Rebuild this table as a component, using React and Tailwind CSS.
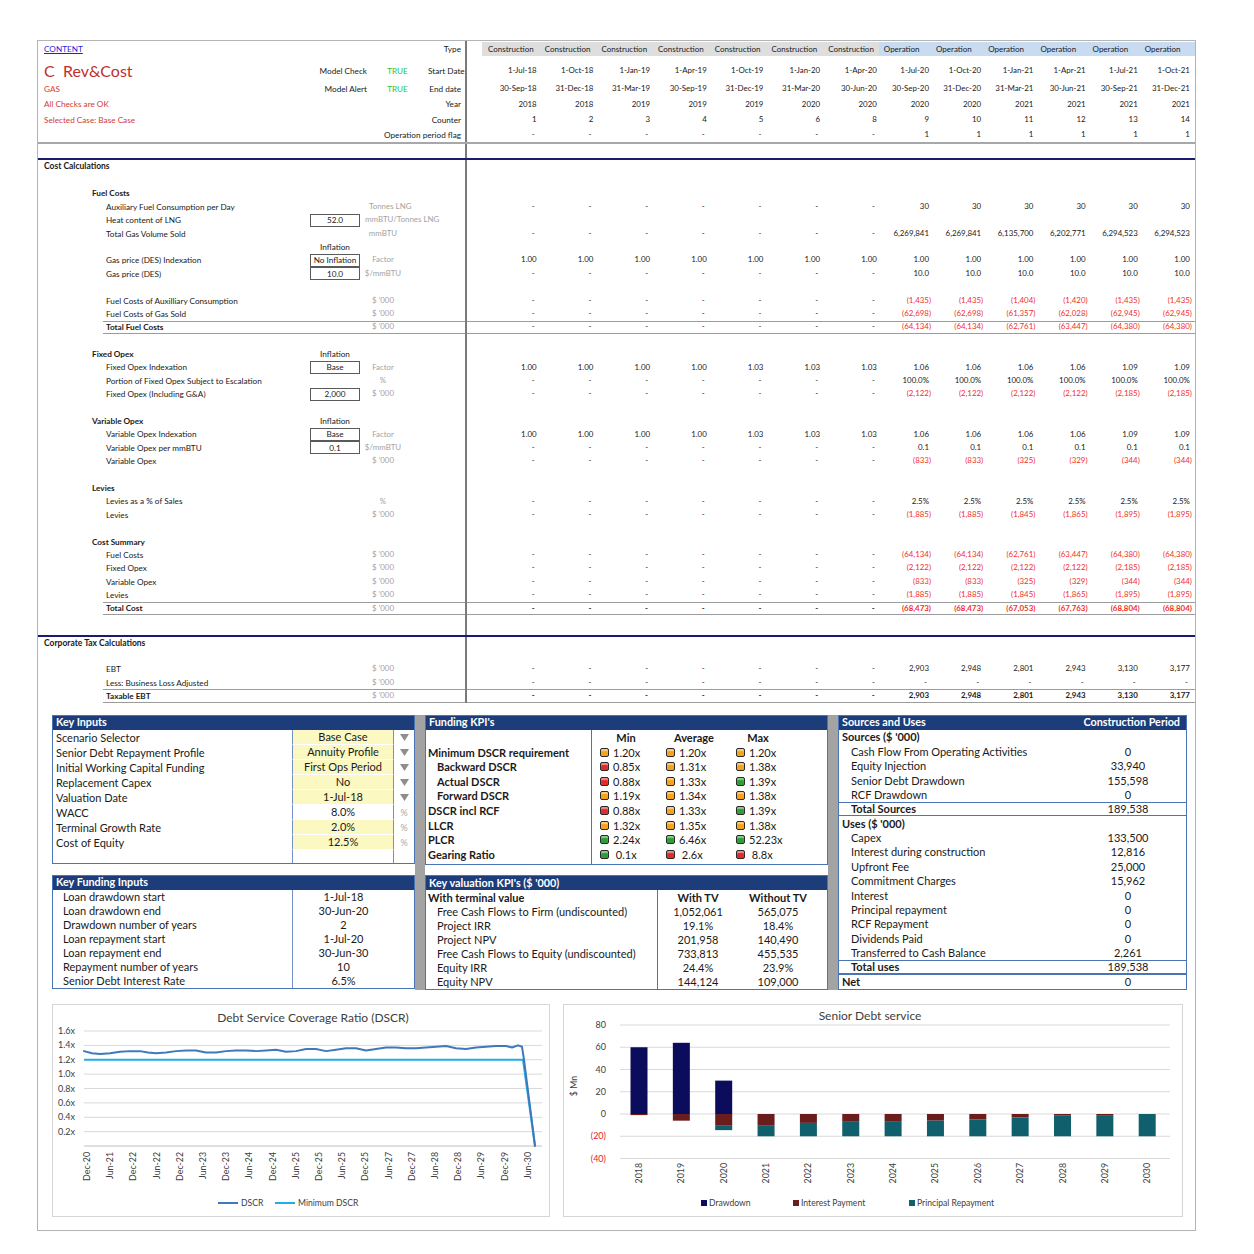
import React from 'react';

const d7 = ['-', '-', '-', '-', '-', '-', '-'];
const six = (v) => [v, v, v, v, v, v];
const ones = Array(13).fill('1.00');
const idx = ['1.00', '1.00', '1.00', '1.00', '1.03', '1.03', '1.03', '1.06', '1.06', '1.06', '1.06', '1.09', '1.09'];
const fuelTot = ['(64,134)', '(64,134)', '(62,761)', '(63,447)', '(64,380)', '(64,380)'];
const fixedOp = ['(2,122)', '(2,122)', '(2,122)', '(2,122)', '(2,185)', '(2,185)'];
const varOp = ['(833)', '(833)', '(325)', '(329)', '(344)', '(344)'];
const levies = ['(1,885)', '(1,885)', '(1,845)', '(1,865)', '(1,895)', '(1,895)'];
const K = "$ '000";

const rows = [
  { t: 'blank' },
  { t: 'sec', label: 'Fuel Costs' },
  { t: 'item', label: 'Auxiliary Fuel Consumption per Day', unit: 'Tonnes LNG', uc: 'pl-[9px] text-left', vals: [...d7, ...six('30')] },
  { t: 'item', label: 'Heat content of LNG', box: '52.0', unit: 'mmBTU/Tonnes LNG', uc: 'pl-[5px] text-left' },
  { t: 'item', label: 'Total Gas Volume Sold', unit: 'mmBTU', vals: [...d7, '6,269,841', '6,269,841', '6,135,700', '6,202,771', '6,294,523', '6,294,523'] },
  { t: 'infl' },
  { t: 'item', label: 'Gas price (DES) Indexation', box: 'No Inflation', unit: 'Factor', vals: ones },
  { t: 'item', label: 'Gas price (DES)', box: '10.0', unit: '$/mmBTU', vals: [...d7, ...six('10.0')] },
  { t: 'blank' },
  { t: 'item', label: 'Fuel Costs of Auxilliary Consumption', unit: K, vals: [...d7, '(1,435)', '(1,435)', '(1,404)', '(1,420)', '(1,435)', '(1,435)'] },
  { t: 'item', label: 'Fuel Costs of Gas Sold', unit: K, vals: [...d7, '(62,698)', '(62,698)', '(61,357)', '(62,028)', '(62,945)', '(62,945)'] },
  { t: 'total', label: 'Total Fuel Costs', vals: [...d7, ...fuelTot], nb: true },
  { t: 'blank' },
  { t: 'sec', label: 'Fixed Opex', infl: true },
  { t: 'item', label: 'Fixed Opex Indexation', box: 'Base', unit: 'Factor', vals: idx },
  { t: 'item', label: 'Portion of Fixed Opex Subject to Escalation', unit: '%', vals: [...d7, ...six('100.0%')] },
  { t: 'item', label: 'Fixed Opex (Including G&A)', box: '2,000', unit: K, vals: [...d7, ...fixedOp] },
  { t: 'blank' },
  { t: 'sec', label: 'Variable Opex', infl: true },
  { t: 'item', label: 'Variable Opex Indexation', box: 'Base', unit: 'Factor', vals: idx },
  { t: 'item', label: 'Variable Opex per mmBTU', box: '0.1', unit: '$/mmBTU', vals: [...d7, ...six('0.1')] },
  { t: 'item', label: 'Variable Opex', unit: K, vals: [...d7, ...varOp] },
  { t: 'blank' },
  { t: 'sec', label: 'Levies' },
  { t: 'item', label: 'Levies as a % of Sales', unit: '%', vals: [...d7, ...six('2.5%')] },
  { t: 'item', label: 'Levies', unit: K, vals: [...d7, ...levies] },
  { t: 'blank' },
  { t: 'sec', label: 'Cost Summary' },
  { t: 'item', label: 'Fuel Costs', unit: K, vals: [...d7, ...fuelTot] },
  { t: 'item', label: 'Fixed Opex', unit: K, vals: [...d7, ...fixedOp] },
  { t: 'item', label: 'Variable Opex', unit: K, vals: [...d7, ...varOp] },
  { t: 'item', label: 'Levies', unit: K, vals: [...d7, ...levies] },
  { t: 'total', label: 'Total Cost', vals: [...d7, '(68,473)', '(68,473)', '(67,053)', '(67,763)', '(68,804)', '(68,804)'] },
  { t: 'blank' },
];

const taxRows = [
  { t: 'blank' },
  { t: 'item', label: 'EBT', unit: K, vals: [...d7, '2,903', '2,948', '2,801', '2,943', '3,130', '3,177'] },
  { t: 'item', label: 'Less: Business Loss Adjusted', unit: K, vals: Array(13).fill('-') },
  { t: 'total', label: 'Taxable EBT', vals: [...d7, '2,903', '2,948', '2,801', '2,943', '3,130', '3,177'] },
];

const startD = ['1-Jul-18', '1-Oct-18', '1-Jan-19', '1-Apr-19', '1-Oct-19', '1-Jan-20', '1-Apr-20', '1-Jul-20', '1-Oct-20', '1-Jan-21', '1-Apr-21', '1-Jul-21', '1-Oct-21'];
const endD = ['30-Sep-18', '31-Dec-18', '31-Mar-19', '30-Sep-19', '31-Dec-19', '31-Mar-20', '30-Jun-20', '30-Sep-20', '31-Dec-20', '31-Mar-21', '30-Jun-21', '30-Sep-21', '31-Dec-21'];
const years = ['2018', '2018', '2019', '2019', '2019', '2020', '2020', '2020', '2020', '2021', '2021', '2021', '2021'];
const counter = ['1', '2', '3', '4', '5', '6', '8', '9', '10', '11', '12', '13', '14'];
const flag = [...d7, ...six('1')];

const LW = 'w-[429px] shrink-0 h-full border-r-2 border-[#7a7a7a] flex items-center';

function DataCells({ vals, bold }) {
  return (
    <div className={`flex h-full items-center text-[7.9px] ${bold ? 'font-bold' : ''}`}>
      <div className="w-[15px] shrink-0" />
      {Array.from({ length: 13 }).map((_, i) => {
        const v = vals ? vals[i] : '';
        const neg = v.startsWith('(');
        return (
          <div
            key={i}
            className={`${i < 7 ? 'w-[56.7px]' : 'w-[52.2px]'} shrink-0 text-right whitespace-nowrap ${neg ? 'text-[#f0302a] pr-0' : v === '-' ? 'pr-[4px]' : 'pr-[2px]'}`}
          >
            {v}
          </div>
        );
      })}
    </div>
  );
}

function Units({ unit, uc }) {
  return <div className={`w-[46px] shrink-0 whitespace-nowrap text-[#a3a3a3] text-[7.9px] ${uc || 'text-center'}`}>{unit}</div>;
}

function Box({ v }) {
  return v ? (
    <div className="w-[50px] h-[13px] shrink-0 border border-[#5a5a5a] flex items-center justify-center leading-none">{v}</div>
  ) : (
    <div className="w-[50px] shrink-0" />
  );
}

function SheetRow({ r }) {
  const H = 'flex h-[13.4px] items-center';
  if (r.t === 'total')
    return (
      <div className={H}>
        <div className={LW}>
          <div className="w-[65px] shrink-0" />
          <div className="flex-1 h-full flex items-center border-y border-[#9c9c9c]">
            <div className="w-[207px] shrink-0 pl-[3px] font-bold">{r.label}</div>
            <Box />
            <Units unit={K} />
          </div>
        </div>
        <div className="flex-1 h-full border-y border-[#9c9c9c]">
          <DataCells vals={r.vals} bold={!r.nb} />
        </div>
      </div>
    );
  if (r.t === 'blank')
    return (
      <div className={H}>
        <div className={LW} />
      </div>
    );
  if (r.t === 'infl' || r.t === 'sec')
    return (
      <div className={H}>
        <div className={LW}>
          <div className="w-[272px] shrink-0 pl-[54px] font-bold">{r.label || ''}</div>
          <div className="w-[50px] shrink-0 text-center">{r.t === 'infl' || r.infl ? 'Inflation' : ''}</div>
        </div>
      </div>
    );
  return (
    <div className={H}>
      <div className={LW}>
        <div className="w-[272px] shrink-0 pl-[68px] whitespace-nowrap">{r.label}</div>
        <Box v={r.box} />
        <Units unit={r.unit} uc={r.uc} />
      </div>
      <div className="flex-1 h-full">{r.vals && <DataCells vals={r.vals} />}</div>
    </div>
  );
}

function HeadRow({ h, left, mid, tf, label, vals, extra }) {
  return (
    <div className={`flex items-center ${h} ${extra || ''}`}>
      <div className={LW}>
        <div className="w-[250px] shrink-0 pl-[6px] whitespace-nowrap">{left}</div>
        {mid ? (
          <>
            <div className="w-[79px] shrink-0 text-right">{mid}</div>
            <div className="w-[61px] shrink-0 text-center text-[#2fbf2f]">{tf}</div>
            <div className="flex-1 text-right pr-[4px] whitespace-nowrap">{label}</div>
          </>
        ) : (
          <div className="flex-1 text-right pr-[4px] whitespace-nowrap">{label}</div>
        )}
      </div>
      <div className="flex-1 h-full">{vals && <DataCells vals={vals} />}</div>
    </div>
  );
}

function Spacer({ h }) {
  return (
    <div className={`flex ${h}`}>
      <div className={LW} />
    </div>
  );
}

function Sheet() {
  return (
    <div className="text-[8.2px] leading-none text-[#1a1a1a]">
      <div className="flex h-[16px] items-center">
        <div className={LW}>
          <div className="w-[250px] shrink-0 pl-[6px]">
            <span className="text-[#1f1fd8] underline">CONTENT</span>
          </div>
          <div className="flex-1 text-right pr-[4px]">Type</div>
        </div>
        <div className="flex h-[14px] items-center text-[8px]">
          <div className="w-[15px] shrink-0" />
          {Array.from({ length: 7 }).map((_, i) => (
            <div key={i} className="w-[56.7px] h-full shrink-0 bg-[#dedede] flex items-center pl-[6px] whitespace-nowrap">
              Construction
            </div>
          ))}
          {Array.from({ length: 6 }).map((_, i) => (
            <div key={i} className="w-[52.2px] h-full shrink-0 bg-[#c9dbf0] flex items-center pl-[5px] whitespace-nowrap">
              Operation
            </div>
          ))}
          <div className="w-[3px] h-full bg-[#c9dbf0]" />
        </div>
      </div>
      <Spacer h="h-[6px]" />
      <HeadRow
        h="h-[16px]"
        left={<span className="text-[16px] text-[#c0302b] leading-none">C&nbsp;&nbsp;Rev&amp;Cost</span>}
        mid="Model Check"
        tf="TRUE"
        label="Start Date"
        vals={startD}
      />
      <Spacer h="h-[2px]" />
      <HeadRow h="h-[16px]" left={<span className="text-[#d23c36] text-[8.2px]">GAS</span>} mid="Model Alert" tf="TRUE" label="End date" vals={endD} />
      <HeadRow h="h-[15px]" left={<span className="text-[#d23c36] text-[8.2px]">All Checks are OK</span>} label="Year" vals={years} />
      <HeadRow h="h-[16px]" left={<span className="text-[#d23c36] text-[8.2px]">Selected Case: Base Case</span>} label="Counter" vals={counter} />
      <HeadRow h="h-[16px]" label="Operation period flag" vals={flag} extra="border-b-2 border-[#a8a8a8]" />
      <Spacer h="h-[14px]" />
      <div className="flex h-[15.4px] items-center border-t-2 border-[#1b1b6e]">
        <div className={LW}>
          <div className="pl-[6px] font-bold text-[8.5px]">Cost Calculations</div>
        </div>
      </div>
      {rows.map((r, i) => (
        <SheetRow key={i} r={r} />
      ))}
      <Spacer h="h-[6.5px]" />
      <div className="flex h-[14px] items-center border-t-2 border-[#1b1b6e]">
        <div className={LW}>
          <div className="pl-[6px] font-bold text-[8.5px]">Corporate Tax Calculations</div>
        </div>
      </div>
      {taxRows.map((r, i) => (
        <SheetRow key={i} r={r} />
      ))}
    </div>
  );
}

function PHead({ left, right }) {
  return (
    <div className="h-[14px] shrink-0 bg-[#1c3d79] text-white font-bold text-[10.8px] leading-none flex items-center justify-between pl-[3px] pr-[6px]">
      <span>{left}</span>
      {right && <span>{right}</span>}
    </div>
  );
}

function Tri() {
  return (
    <svg width="9" height="7" viewBox="0 0 9 7">
      <path d="M0 0 H9 L4.5 7 Z" fill="#8e8e8e" />
    </svg>
  );
}

const KI = [
  ['Scenario Selector', 'Base Case', 'a', true],
  ['Senior Debt Repayment Profile', 'Annuity Profile', 'a', true],
  ['Initial Working Capital Funding', 'First Ops Period', 'a', true],
  ['Replacement Capex', 'No', 'a', true],
  ['Valuation Date', '1-Jul-18', 'a', true],
  ['WACC', '8.0%', 'p', false],
  ['Terminal Growth Rate', '2.0%', 'p', true],
  ['Cost of Equity', '12.5%', 'p', true],
];

const KF = [
  ['Loan drawdown start', '1-Jul-18'],
  ['Loan drawdown end', '30-Jun-20'],
  ['Drawdown number of years', '2'],
  ['Loan repayment start', '1-Jul-20'],
  ['Loan repayment end', '30-Jun-30'],
  ['Repayment number of years', '10'],
  ['Senior Debt Interest Rate', '6.5%'],
];

const COL = { o: 'bg-[#f6a21c]', r: 'bg-[#e12b2b]', g: 'bg-[#2f9d36]' };

const FK = [
  ['Minimum DSCR requirement', false, [['o', '1.20x'], ['o', '1.20x'], ['o', '1.20x']]],
  ['Backward DSCR', true, [['r', '0.85x'], ['o', '1.31x'], ['o', '1.38x']]],
  ['Actual DSCR', true, [['r', '0.88x'], ['o', '1.33x'], ['g', '1.39x']]],
  ['Forward DSCR', true, [['o', '1.19x'], ['o', '1.34x'], ['o', '1.38x']]],
  ['DSCR incl RCF', false, [['r', '0.88x'], ['o', '1.33x'], ['g', '1.39x']]],
  ['LLCR', false, [['o', '1.32x'], ['o', '1.35x'], ['o', '1.38x']]],
  ['PLCR', false, [['g', '2.24x'], ['g', '6.46x'], ['g', '52.23x']]],
  ['Gearing Ratio', false, [['g', '\u00a00.1x'], ['r', '\u00a02.6x'], ['r', '\u00a08.8x']]],
];

const KV = [
  ['With terminal value', 'With TV', 'Without TV', 'h'],
  ['Free Cash Flows to Firm (undiscounted)', '1,052,061', '565,075'],
  ['Project IRR', '19.1%', '18.4%'],
  ['Project NPV', '201,958', '140,490'],
  ['Free Cash Flows to Equity (undiscounted)', '733,813', '455,535'],
  ['Equity IRR', '24.4%', '23.9%'],
  ['Equity NPV', '144,124', '109,000'],
];

const SU = [
  ["Sources ($ '000)", '', 's'],
  ['Cash Flow From Operating Activities', '0'],
  ['Equity Injection', '33,940'],
  ['Senior Debt Drawdown', '155,598'],
  ['RCF Drawdown', '0'],
  ['Total Sources', '189,538', 't'],
  ["Uses ($ '000)", '', 's'],
  ['Capex', '133,500'],
  ['Interest during construction', '12,816'],
  ['Upfront Fee', '25,000'],
  ['Commitment Charges', '15,962'],
  ['Interest', '0'],
  ['Principal repayment', '0'],
  ['RCF Repayment', '0'],
  ['Dividends Paid', '0'],
  ['Transferred to Cash Balance', '2,261'],
  ['Total uses', '189,538', 't'],
  ['Net', '0', 'n'],
];

function Light({ c }) {
  return <div className={`w-[9px] h-[9px] shrink-0 rounded-[2px] border border-[#2a2a2a] ${COL[c]} shadow-[inset_0_2px_1px_rgba(255,255,255,0.45)]`} />;
}

function Panels() {
  return (
    <div className="flex pl-[14px] h-[275px] text-[11px] leading-none text-[#1a1a1a]">
      <div className="w-[363px] shrink-0 flex flex-col">
        <div className="border border-[#4b74b5] flex flex-col">
          <PHead left="Key Inputs" />
          {KI.map(([l, v, k, y]) => (
            <div key={l} className="flex h-[15px] items-center">
              <div className="w-[239px] pl-[3px] shrink-0 whitespace-nowrap">{l}</div>
              <div
                className={`w-[102px] h-full shrink-0 border-l border-r border-b border-l-[#7391c4] border-r-[#7391c4] border-b-white flex items-center justify-center ${y ? 'bg-[#fbf8c2]' : 'bg-white'}`}
              >
                {v}
              </div>
              <div className="flex-1 flex justify-center items-center">
                {k === 'a' ? <Tri /> : <span className="text-[#a8a8a8] text-[9px]">%</span>}
              </div>
            </div>
          ))}
          <div className="flex h-[13px]">
            <div className="w-[239px] shrink-0" />
            <div className="w-[102px] shrink-0 border-l border-r border-[#7391c4]" />
          </div>
        </div>
        <div className="h-[11px]" />
        <div className="border border-[#4b74b5] flex flex-col">
          <PHead left="Key Funding Inputs" />
          {KF.map(([l, v]) => (
            <div key={l} className="flex h-[14px] items-center">
              <div className="w-[239px] pl-[10px] shrink-0 whitespace-nowrap">{l}</div>
              <div className="w-[102px] h-full shrink-0 border-l border-[#7391c4] flex items-center justify-center">{v}</div>
            </div>
          ))}
        </div>
      </div>
      <div className="w-[10px] shrink-0 bg-[#a3a3a3]" />
      <div className="w-[403px] shrink-0 flex flex-col">
        <div className="border border-[#4b74b5] flex flex-col">
          <PHead left="Funding KPI's" />
          <div className="flex h-[15px] items-center font-bold">
            <div className="w-[166px] h-full shrink-0 border-r border-[#4b74b5]" />
            <div className="w-[68px] text-center">Min</div>
            <div className="w-[68px] text-center">Average</div>
            <div className="w-[60px] text-center">Max</div>
          </div>
          {FK.map(([l, ind, cells]) => (
            <div key={l} className="flex h-[14.6px] items-center">
              <div className={`w-[166px] h-full shrink-0 border-r border-[#4b74b5] flex items-center font-bold whitespace-nowrap ${ind ? 'pl-[11px]' : 'pl-[2px]'}`}>{l}</div>
              {cells.map(([c, v], j) => (
                <div key={j} className={`${j === 2 ? 'w-[80px]' : 'w-[68px]'} shrink-0 flex items-center gap-[4px] ${j === 1 ? 'pl-[6px]' : 'pl-[8px]'}`}>
                  <Light c={c} />
                  <span className="whitespace-pre">{v}</span>
                </div>
              ))}
            </div>
          ))}
          <div className="flex h-[3px]">
            <div className="w-[166px] shrink-0 border-r border-[#4b74b5]" />
          </div>
        </div>
        <div className="h-[11px]" />
        <div className="border border-[#4b74b5] flex flex-col">
          <PHead left="Key valuation KPI's ($ '000)" />
          {KV.map(([l, a, b, h]) => (
            <div key={l} className={`flex h-[14.1px] items-center ${h ? 'font-bold' : ''}`}>
              <div className={`w-[232px] h-full shrink-0 border-r border-[#4b74b5] flex items-center whitespace-nowrap ${h ? 'pl-[2px]' : 'pl-[11px]'}`}>{l}</div>
              <div className="w-[80px] text-center shrink-0">{a}</div>
              <div className="w-[80px] text-center shrink-0">{b}</div>
            </div>
          ))}
        </div>
      </div>
      <div className="w-[10px] shrink-0 bg-[#a3a3a3]" />
      <div className="w-[349px] shrink-0 border border-[#4b74b5] flex flex-col">
        <PHead left="Sources and Uses" right="Construction Period" />
        {SU.map(([l, v, k]) => (
          <div
            key={l}
            className={`flex h-[14.38px] items-center ${k === 't' ? 'border-y border-[#4b74b5]' : ''} ${k === 'n' ? 'border-t border-[#4b74b5]' : ''}`}
          >
            <div className={`w-[236px] shrink-0 whitespace-nowrap ${k === 's' || k === 'n' ? 'pl-[3px] font-bold' : 'pl-[12px]'} ${k === 't' ? 'font-bold' : ''}`}>{l}</div>
            <div className="w-[106px] text-center shrink-0">{v}</div>
          </div>
        ))}
      </div>
    </div>
  );
}

const dscrPts = [
  [84, 1.32], [92, 1.29], [100, 1.28], [110, 1.29], [120, 1.31], [130, 1.32], [140, 1.32], [148, 1.3], [156, 1.29],
  [166, 1.3], [176, 1.32], [186, 1.33], [196, 1.33], [206, 1.3], [216, 1.3], [226, 1.32], [236, 1.33], [246, 1.33],
  [256, 1.32], [266, 1.33], [276, 1.34], [286, 1.31], [296, 1.32], [306, 1.35], [316, 1.35], [326, 1.32], [336, 1.34],
  [346, 1.36], [356, 1.36], [366, 1.33], [376, 1.35], [386, 1.37], [396, 1.37], [406, 1.36], [416, 1.36], [426, 1.37],
  [436, 1.38], [446, 1.39], [456, 1.36], [466, 1.35], [476, 1.37], [486, 1.38], [496, 1.39], [506, 1.39], [512, 1.37],
  [518, 1.4], [522, 1.38], [524, 1.2], [535, 0],
];
const dscrLabels = ['Dec-20', 'Jun-21', 'Dec-22', 'Jun-22', 'Dec-22', 'Jun-23', 'Dec-23', 'Jun-24', 'Dec-24', 'Jun-25', 'Dec-25', 'Jun-25', 'Dec-25', 'Jun-27', 'Dec-27', 'Jun-28', 'Dec-28', 'Jun-29', 'Dec-29', 'Jun-30'];

function DscrChart() {
  const X0 = 53;
  const y = (v) => 141 - v * 71.875;
  const pts = dscrPts.map(([px, v]) => `${px - X0},${y(v)}`).join(' ');
  const minPts = [[84, 1.2], [523, 1.2], [535, 0]].map(([px, v]) => `${px - X0},${y(v)}`).join(' ');
  return (
    <div className="w-[498px] h-[213px] shrink-0 border border-[#d6d6d6]">
      <svg width="496" height="211" viewBox="0 0 496 211" fontFamily="Lato, sans-serif">
        <text x="260" y="17" textAnchor="middle" fontSize="12" fill="#404040">Debt Service Coverage Ratio (DSCR)</text>
        {[1, 2, 3, 4, 5, 6, 7, 8].map((k) => (
          <g key={k}>
            <line x1="31" x2="489" y1={y(k * 0.2)} y2={y(k * 0.2)} stroke="#d9d9d9" strokeWidth="1" />
            <text x="22" y={y(k * 0.2) + 3} textAnchor="end" fontSize="9" fill="#404040">{(k * 0.2).toFixed(1)}x</text>
          </g>
        ))}
        <line x1="31" x2="489" y1={y(0)} y2={y(0)} stroke="#bfbfbf" strokeWidth="1" />
        {dscrLabels.map((l, i) => {
          const cx = 34 + i * 23.2;
          return (
            <text key={i} transform={`translate(${cx + 3},147) rotate(-90)`} textAnchor="end" fontSize="8.8" fill="#404040">{l}</text>
          );
        })}
        <polyline points={minPts} fill="none" stroke="#1eaee8" strokeWidth="2" strokeLinejoin="round" />
        <polyline points={pts} fill="none" stroke="#3f78bd" strokeWidth="2" strokeLinejoin="round" strokeLinecap="round" />
        <line x1="165" x2="185" y1="198" y2="198" stroke="#3f78bd" strokeWidth="2" />
        <text x="188" y="201" fontSize="8.6" fill="#404040">DSCR</text>
        <line x1="222" x2="242" y1="198" y2="198" stroke="#1eaee8" strokeWidth="2" />
        <text x="245" y="201" fontSize="8.6" fill="#404040">Minimum DSCR</text>
      </svg>
    </div>
  );
}

const bars = [
  [60, -1, 0], [64, -6, 0], [30, -10, -4.5], [0, -10, -10], [0, -8, -12], [0, -7, -13], [0, -7, -13],
  [0, -6, -14], [0, -5, -15], [0, -3, -17], [0, -1.5, -18.5], [0, -1, -19], [0, 0, -20],
];

function DebtChart() {
  const y = (v) => 109 - v * 1.1125;
  return (
    <div className="w-[620px] h-[213px] shrink-0 border border-[#d6d6d6]">
      <svg width="618" height="211" viewBox="0 0 618 211" fontFamily="Lato, sans-serif">
        <text x="306" y="15" textAnchor="middle" fontSize="12" fill="#404040">Senior Debt service</text>
        {[80, 60, 40, 20, 0, -20, -40].map((v) => (
          <g key={v}>
            <line x1="56" x2="606" y1={y(v)} y2={y(v)} stroke="#d9d9d9" strokeWidth="1" />
            <text x="42" y={y(v) + 3} textAnchor="end" fontSize="9" fill={v < 0 ? '#e8211b' : '#404040'}>
              {v < 0 ? `(${-v})` : v}
            </text>
          </g>
        ))}
        <text transform="translate(13,81) rotate(-90)" textAnchor="middle" fontSize="8.8" fill="#404040">$ Mn</text>
        {bars.map(([d, it, p], i) => {
          const cx = 75 + i * 42.35;
          const x = cx - 8.5;
          return (
            <g key={i}>
              {d > 0 && <rect x={x} y={y(d)} width="17" height={y(0) - y(d)} fill="#0c0c5c" />}
              {it < 0 && <rect x={x} y={y(0)} width="17" height={y(it) - y(0)} fill="#6b1c1c" />}
              {p < 0 && <rect x={x} y={y(it)} width="17" height={y(it + p) - y(it)} fill="#0f5f6c" />}
              <text transform={`translate(${cx + 3},158) rotate(-90)`} textAnchor="end" fontSize="8.8" fill="#404040">{2018 + i}</text>
            </g>
          );
        })}
        <rect x="137" y="195" width="6" height="6" fill="#0c0c5c" />
        <text x="145" y="201" fontSize="8.6" fill="#404040">Drawdown</text>
        <rect x="229" y="195" width="6" height="6" fill="#6b1c1c" />
        <text x="237" y="201" fontSize="8.6" fill="#404040">Interest Payment</text>
        <rect x="345" y="195" width="6" height="6" fill="#0f5f6c" />
        <text x="353" y="201" fontSize="8.6" fill="#404040">Principal Repayment</text>
      </svg>
    </div>
  );
}

export default function App() {
  return (
    <div className="w-[1254px] h-[1254px] bg-white pt-[40px] pl-[37px] font-[Lato,sans-serif] overflow-hidden">
      <div className="w-[1159px] h-[1191px] border border-[#b4b4b4] flex flex-col">
        <Sheet />
        <div className="h-[12px] shrink-0" />
        <Panels />
        <div className="h-[14px] shrink-0" />
        <div className="flex pl-[14px] gap-[13px]">
          <DscrChart />
          <DebtChart />
        </div>
      </div>
    </div>
  );
}
